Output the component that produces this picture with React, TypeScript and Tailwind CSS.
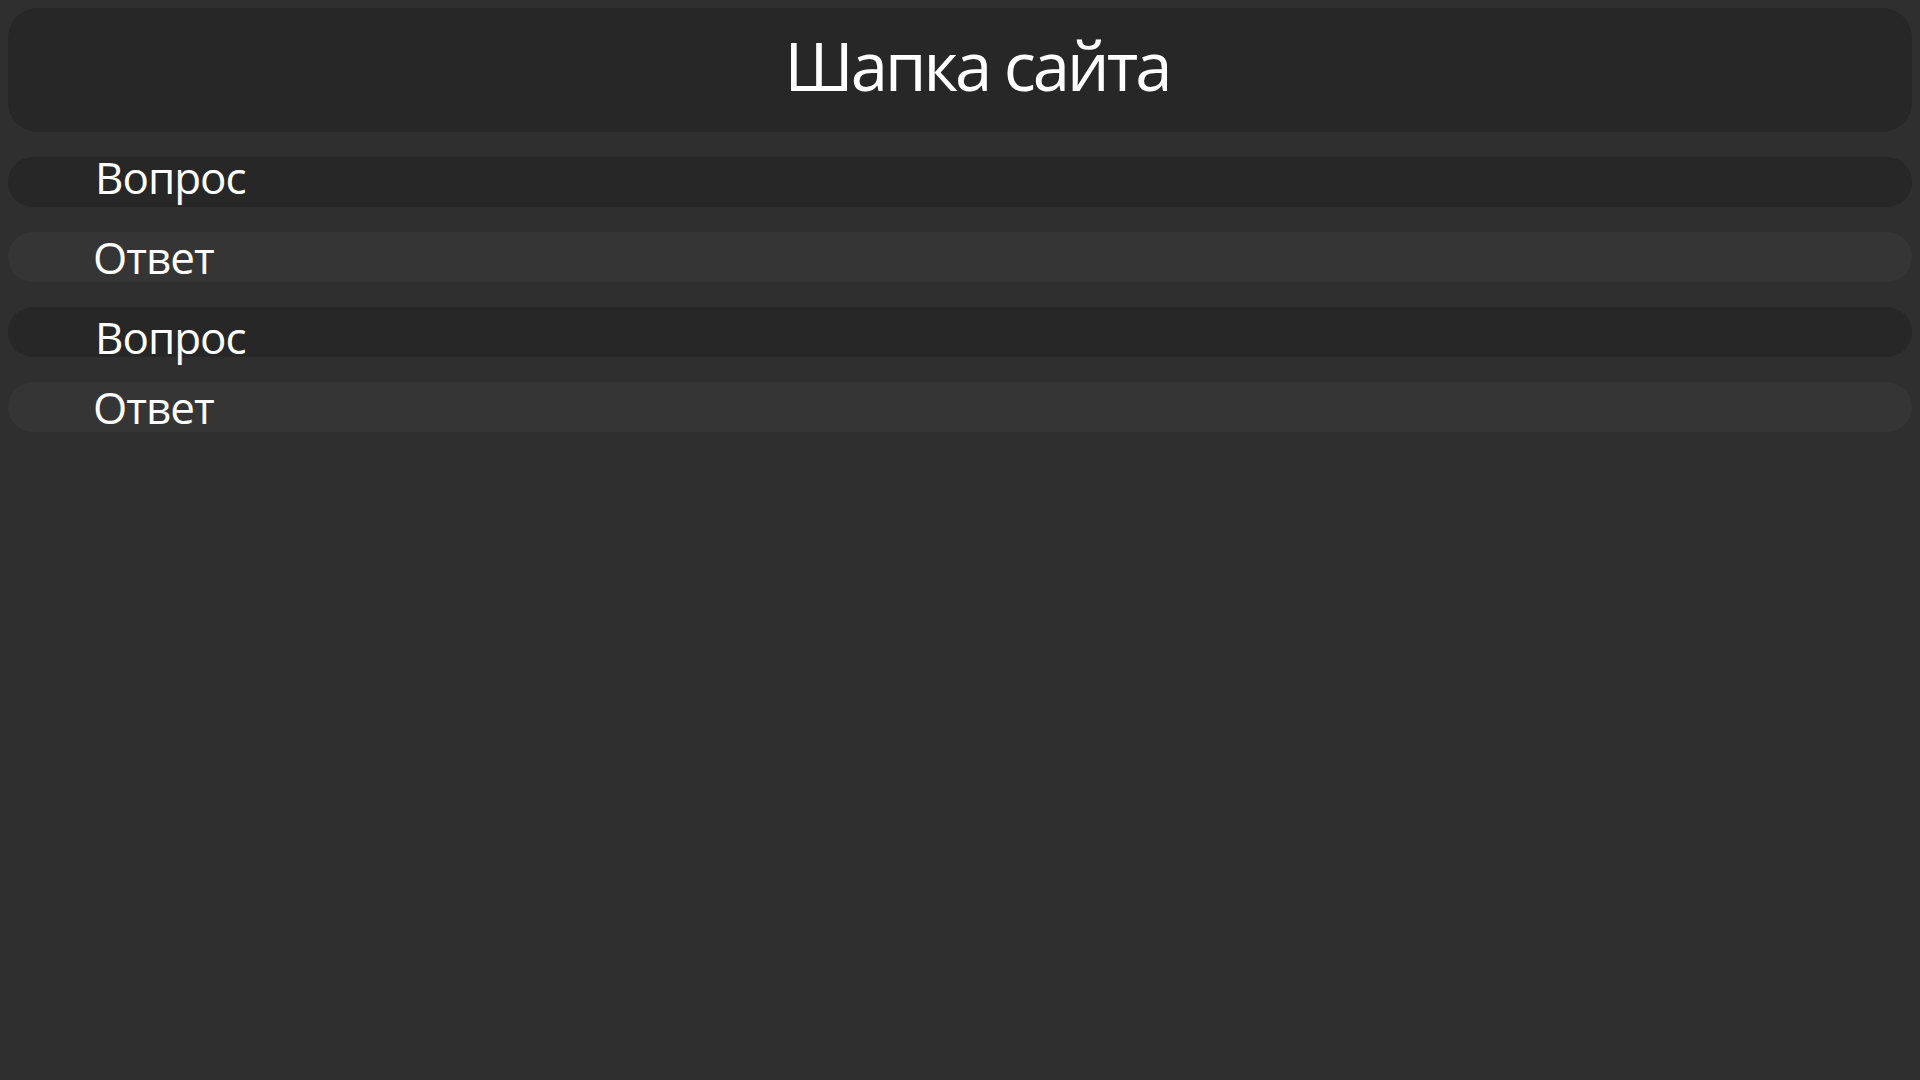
const rows = [
  { text: 'Вопрос', kind: 'q', shift: 'mt-[-5px]' },
  { text: 'Ответ', kind: 'a', shift: 'mt-0' },
  { text: 'Вопрос', kind: 'q', shift: 'mt-[5px]' },
  { text: 'Ответ', kind: 'a', shift: 'mt-0' },
];

export default function App() {
  return (
    <div
      className="min-h-screen w-full bg-[#2f2f2f] p-2 text-white"
      style={{ fontFamily: '"Open Sans", "Noto Sans", sans-serif' }}
    >
      <div className="flex flex-col gap-[25px]">
        {/* шапка */}
        <header className="flex h-[124px] items-center justify-center rounded-[30px] bg-[#272727]">
          <h1 className="ml-[34px] mt-[-10px] text-[67px] leading-none tracking-[-3px]">Шапка сайта</h1>
        </header>

        {rows.map((row, i) => (
          <div
            key={i}
            className={`flex h-[50px] items-start overflow-visible rounded-full ${
              row.kind === 'q' ? 'bg-[#272727] pl-[87px]' : 'bg-[#353535] pl-[85px]'
            }`}
          >
            <span className={`${row.shift} text-[44px] leading-[50px] tracking-[-1px]`}>{row.text}</span>
          </div>
        ))}
      </div>
    </div>
  );
}
